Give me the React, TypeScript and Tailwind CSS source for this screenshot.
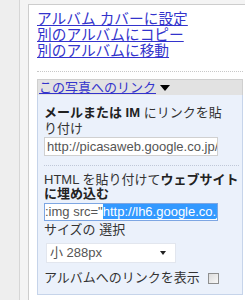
import React from "react";

export default function App() {
  return (
    <div className="w-[245px] h-[300px] overflow-hidden bg-[#eeeeee] flex font-['Liberation_Sans','Noto_Sans_CJK_JP',sans-serif]">
      <div className="w-[20px] shrink-0 border-r border-[#d6d6d6]" />
      <div className="flex-1 flex flex-col pl-[8px] pt-[4px] bg-[#f4f4f4]">
        <div className="flex-1 bg-white border-l border-t border-[#cdcdcd] pl-[8px] pr-[8px] pt-[6px]">
          <div className="flex flex-col text-[14.7px] leading-[16px] text-[#3333cc]">
            <a className="underline self-start whitespace-nowrap" href="#">アルバム カバーに設定</a>
            <a className="underline self-start whitespace-nowrap" href="#">別のアルバムにコピー</a>
            <a className="underline self-start whitespace-nowrap" href="#">別のアルバムに移動</a>
          </div>
          <div className="mt-[12px] border-t border-dotted border-[#c8c8c8]" />
          <div className="mt-[7px] h-[16px] bg-[#e2e2e2] border-t border-x border-[#cfcfcf] flex items-center pl-px text-[13px] leading-[15px] whitespace-nowrap">
            <a className="underline text-[#3333cc]" href="#">この写真へのリンク</a>
            <svg className="ml-[4px]" width="10" height="6" viewBox="0 0 10 6">
              <polygon points="0,0 10,0 5,6" fill="#000" />
            </svg>
          </div>
          <div className="h-[200px] bg-[#ebf1fb] border-x border-b border-[#c6d4ea] pl-[6px] pr-[3px] pt-[10px] text-[13px] leading-[16px] text-[#333333]">
            <div className="whitespace-nowrap">
              <span className="font-bold text-[#222]">メールまたは IM</span> にリンクを貼
              <br />
              り付け
            </div>
            <div className="w-[174px] h-[19px] bg-white border border-[#d0d0d0] overflow-hidden whitespace-nowrap pl-[2px] text-[13px] leading-[17px] text-[#555]">
              http://picasaweb.google.co.jp/
            </div>
            <div className="mt-[9px] border-t border-dotted border-[#c0c8d8]" />
            <div className="mt-[7px] leading-[14px] whitespace-nowrap">
              HTML を貼り付けて<span className="font-bold text-[#222]">ウェブサイト</span>
              <br />
              <span className="font-bold text-[#222]">に埋め込む</span>
            </div>
            <div className="mt-[2px] w-[174px] h-[18px] bg-white border border-[#7da6e3] overflow-hidden whitespace-nowrap text-[13px] leading-[16px] text-[#555]">
              :img src="<span className="bg-[#3399ff] text-white">http://lh6.google.co.jp/</span>
            </div>
            <div className="mt-[1px]">サイズの 選択</div>
            <div className="mt-[5px] ml-[2px] w-[130px] h-[20px] bg-white border border-[#e2e6ee] flex items-center justify-between pl-[3px] pr-[9px] text-[13px] text-[#555]">
              <span>小 288px</span>
              <svg width="6" height="4" viewBox="0 0 6 4">
                <polygon points="0,0 6,0 3,4" fill="#222" />
              </svg>
            </div>
            <div className="mt-[7px] flex items-center whitespace-nowrap">
              <span>アルバムへのリンクを表示</span>
              <span className="ml-[8px] w-[11px] h-[11px] border border-[#8e8f8f] bg-gradient-to-br from-[#dcdcdc] to-[#f8f8f8]" />
            </div>
          </div>
        </div>
      </div>
    </div>
  );
}
